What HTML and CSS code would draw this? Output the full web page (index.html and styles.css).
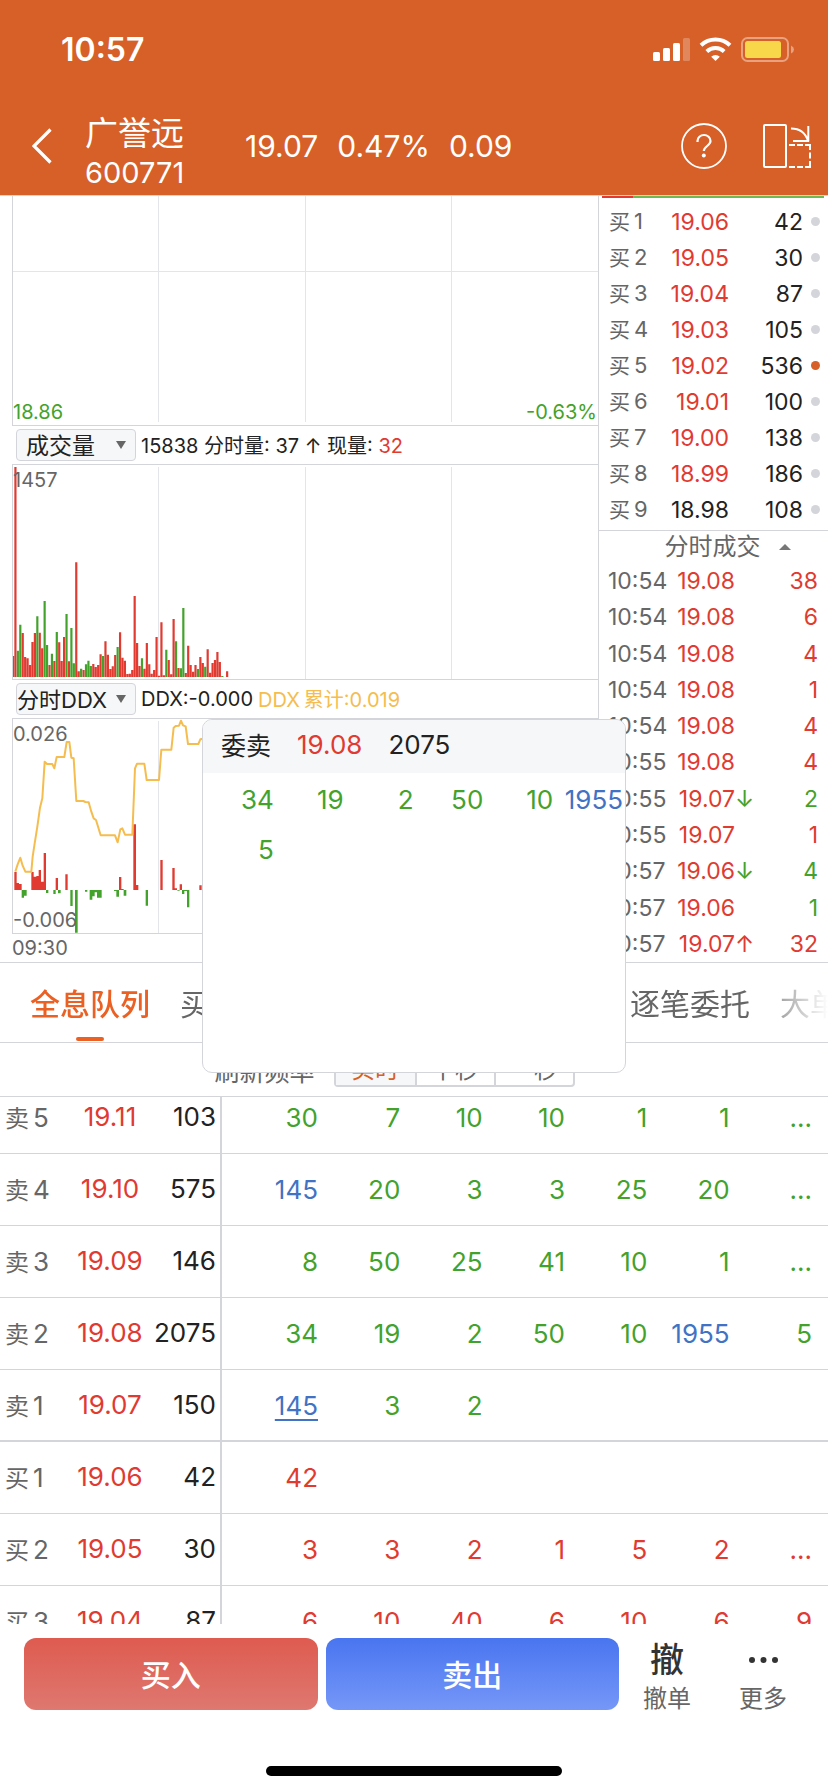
FILE: index.html
```html
<!DOCTYPE html>
<html lang="zh-CN">
<head>
<meta charset="utf-8">
<meta name="viewport" content="width=device-width, initial-scale=1">
<title>广誉远 600771</title>
<link rel="stylesheet" href="styles.css">
</head>
<body>
<div class="page">
  <header class="top">
    <div class="status">
      <span class="clock">10:57</span>
      <svg class="status-icons" width="142" height="26" viewBox="0 0 142 26" aria-hidden="true">
        <g fill="#fff">
          <rect x="0" y="15" width="7" height="9" rx="1.5"/>
          <rect x="10" y="11" width="7" height="13" rx="1.5"/>
          <rect x="20" y="6" width="7" height="18" rx="1.5"/>
          <rect x="30" y="1" width="7" height="23" rx="1.5" opacity=".25"/>
          <path d="M62.500 24l-4.300-4.300a6.500 6.500 0 0 1 8.600 0z"/>
        </g>
        <g fill="none" stroke="#fff" stroke-width="4">
          <path d="M48 8.300a21 21 0 0 1 29 0"/>
          <path d="M53.800 14.500a12.800 12.800 0 0 1 17.400 0"/>
        </g>
        <rect x="89" y="1" width="46" height="23" rx="5.500" fill="none" stroke="#e9a27f" stroke-width="2"/>
        <rect x="92" y="4" width="36" height="17" rx="2.500" fill="#f8d74a"/>
        <path d="M138 8.500q3 1.300 3 4t-3 4z" fill="#e9a27f"/>
      </svg>
    </div>
    <nav class="nav">
      <button class="icon-btn back" aria-label="返回">
        <svg width="20" height="38" viewBox="0 0 20 38"><path d="M18.500 2.500L2 19l16.500 16.500" fill="none" stroke="#fff" stroke-width="3.200"/></svg>
      </button>
      <div class="stock">
        <span class="stock-name">广誉远</span>
        <span class="stock-code">600771</span>
      </div>
      <div class="quote"><span>19.07</span><span>0.47%</span><span>0.09</span></div>
      <div class="nav-actions">
        <button class="icon-btn" aria-label="帮助">
          <svg width="46" height="46" viewBox="0 0 46 46" fill="none" stroke="#fff"><circle cx="23" cy="23" r="22" stroke-width="1.800"/><path d="M16.500 19v-1a6.500 6 0 0 1 13 0c0 4.500-6.700 5.500-6.700 10" stroke-width="2.200"/><circle cx="22.800" cy="32.500" r="2" fill="#fff" stroke="none"/></svg>
        </button>
        <button class="icon-btn" aria-label="横屏">
          <svg width="48" height="46" viewBox="0 0 48 46" fill="none" stroke="#fff" stroke-width="2"><rect x="1" y="2" width="22" height="42" rx="1"/><path d="M28 5.500c10 0 15 6 17 12.500M45.300 3v15.500M30 18h16"/><path d="M26 22h6m2 0h6m2 0h5v5m0 2.500v6m0 2.500v6h-5m-2 0h-6m-2 0h-6"/></svg>
        </button>
      </div>
    </nav>
  </header>

  <main class="body">
    <section class="market">
      <div class="charts">
        <div class="chart price-chart">
          <svg viewBox="0 0 585 229" preserveAspectRatio="none" aria-hidden="true"><path class="grid" d="M0 75.500h585M145.500 0v226M292.500 0v226M438.500 0v226"/></svg>
          <span class="mark bottom-left green">18.86</span>
          <span class="mark bottom-right green">-0.63%</span>
        </div>
        <div class="toolbar">
          <span class="picker">
            <select class="wide" aria-label="副图指标一"><option>成交量</option></select>
            <svg width="10" height="8" viewBox="0 0 10 8" aria-hidden="true"><path d="M0 0h10L5 8z" fill="#666"/></svg>
          </span>
          <span>15838 分时量: 37 ↑ 现量: <span class="red">32</span></span>
        </div>
        <div class="chart sub-chart">
          <svg viewBox="0 0 585 214" preserveAspectRatio="none" aria-hidden="true"><path class="grid" d="M145.500 2v212M292.500 2v212M438.500 2v212"/></svg>
          <svg viewBox="0.45 45 240.4 642" preserveAspectRatio="none" aria-hidden="true">
            <path class="fill-red" d="M0 681V618h.9V681M1 681V51h.9V681M4 681V549h.9V681M5 681V621h.9V681M6 681V625h.9V681M7 681V645h.9V681M8 681V576h.9V681M9 681V549h.9V681M11 681V548h.9V681M12 681V595h.9V681M15 681V645h.9V681M17 681V633h.9V681M19 681V577h.9V681M20 681V633h.9V681M21 681V561h.9V681M23 681V634h.9V681M26 681V337h.9V681M27 681V664h.9V681M29 681V660h.9V681M33 681V642h.9V681M34 681V651h.9V681M35 681V645h.9V681M36 681V613h.9V681M38 681V574h.9V681M39 681V614h.9V681M40 681V657h.9V681M41 681V649h.9V681M42 681V615h.9V681M44 681V547h.9V681M45 681V623h.9V681M46 681V632h.9V681M47 681V672h.9V681M48 681V671h.9V681M49 681V660h.9V681M50 681V438h.9V681M51 681V579h.9V681M52 681V648h.9V681M54 681V656h.9V681M55 681V579h.9V681M56 681V643h.9V681M57 681V671h.9V681M58 681V660h.9V681M59 681V561h.9V681M60 681V677h.9V681M61 681V517h.9V681M62 681V676h.9V681M64 681V630h.9V681M65 681V673h.9V681M66 681V507h.9V681M68 681V654h.9V681M71 681V669h.9V681M72 681V587h.9V681M73 681V645h.9V681M74 681V665h.9V681M75 681V645h.9V681M77 681V621h.9V681M78 681V639h.9V681M80 681V598h.9V681M81 681V668h.9V681M82 681V639h.9V681M83 681V630h.9V681M84 681V606h.9V681M85 681V636h.9V681M88 681V664h.9V681"/>
            <path class="fill-green" d="M2 681V602h.9V681M3 681V524h.9V681M10 681V499h.9V681M13 681V453h.9V681M14 681V585h.9V681M16 681V611h.9V681M18 681V546h.9V681M22 681V492h.9V681M24 681V534h.9V681M25 681V640h.9V681M28 681V656h.9V681M30 681V643h.9V681M31 681V632h.9V681M32 681V648h.9V681M37 681V618h.9V681M43 681V591h.9V681M53 681V625h.9V681M63 681V599h.9V681M67 681V574h.9V681M69 681V655h.9V681M70 681V474h.9V681M76 681V657h.9V681M79 681V650h.9V681M86 681V678h.9V681"/>
          </svg>
          <span class="mark top-left">1457</span>
        </div>
        <div class="toolbar">
          <span class="picker">
            <select aria-label="副图指标二"><option>分时DDX</option></select>
            <svg width="10" height="8" viewBox="0 0 10 8" aria-hidden="true"><path d="M0 0h10L5 8z" fill="#666"/></svg>
          </span>
          <span>DDX:-0.000</span>
          <span class="amber">DDX<span class="cjk-gap">累计:0.019</span></span>
        </div>
        <div class="chart sub-chart">
          <svg viewBox="0 0 585 214" preserveAspectRatio="none" aria-hidden="true"><path class="grid" d="M145.500 2v212M292.500 2v212M438.500 2v212"/></svg>
          <svg viewBox="39 132 1755 642" preserveAspectRatio="none" aria-hidden="true">
            <path class="fill-red" d="M43 645V591h7V624h7V627h8V645zM94 645V591h7V605h8V603h7V585h7V620h8V534h7V645zM167 645V609h7V645zM196 645V598h7V645zM357 645V606h7V642h7v3zM400 645V448h8V630h7V645zM481 645V555h7V645zM517 645V579h7V640h7v5zM539 645V628h7V645zM598 645V631h7V645z"/>
            <path class="fill-green" d="M65 645V668h7V662h8V645zM138 645v9h7v-9zM160 645v12h7v-12zM174 645v10h8v-10zM211 645V693h7V645zM225 645V773h8V645zM255 645v5h7v-5zM269 645V674h8V664h7V652h7V668h14V645zM342 645v3h7V665h8V645zM371 645V662h8V645zM437 645V692h7V645zM532 645v2h7v-2zM546 645v12h7v-9h8V697h7V645z"/>
            <path class="ddx-line" d="M46 590L53 568 61 548 68 572 76 590H94L98 545 104 505 112 455 120 398 127 370 134 260 141 267H157L163 280 170 246H193L200 201H208L214 248 221 250 229 378H250L256 381 266 382 274 410 281 430 288 435 302 481H345L353 502 361 463 367 460 375 479H397L405 280 411 266H433L440 315H477L484 224H514L521 158 527 153 537 152 543 137 549 151 557 154 564 207H595L601 193 610 191"/>
          </svg>
          <span class="mark top-left">0.026</span>
          <span class="mark bottom-left">-0.006</span>
        </div>
        <div class="time-axis">09:30</div>
      </div>

      <aside class="depth">
        <div class="ratio"><i></i></div>
        <table class="book">
          <tr><th>买<b>1</b></th><td class="red">19.06</td><td>42</td><td><i></i></td></tr>
          <tr><th>买<b>2</b></th><td class="red">19.05</td><td>30</td><td><i></i></td></tr>
          <tr><th>买<b>3</b></th><td class="red">19.04</td><td>87</td><td><i></i></td></tr>
          <tr><th>买<b>4</b></th><td class="red">19.03</td><td>105</td><td><i></i></td></tr>
          <tr><th>买<b>5</b></th><td class="red">19.02</td><td>536</td><td><i class="hot"></i></td></tr>
          <tr><th>买<b>6</b></th><td class="red">19.01</td><td>100</td><td><i></i></td></tr>
          <tr><th>买<b>7</b></th><td class="red">19.00</td><td>138</td><td><i></i></td></tr>
          <tr><th>买<b>8</b></th><td class="red">18.99</td><td>186</td><td><i></i></td></tr>
          <tr><th>买<b>9</b></th><td>18.98</td><td>108</td><td><i></i></td></tr>
        </table>
        <button class="ticks-title">分时成交<svg width="12" height="6" viewBox="0 0 12 6" aria-hidden="true"><path d="M0 6h12L6 0z" fill="#777"/></svg></button>
        <ul class="ticks">
          <li><span>10:54</span><span class="red">19.08</span><span></span><span class="red">38</span></li>
          <li><span>10:54</span><span class="red">19.08</span><span></span><span class="red">6</span></li>
          <li><span>10:54</span><span class="red">19.08</span><span></span><span class="red">4</span></li>
          <li><span>10:54</span><span class="red">19.08</span><span></span><span class="red">1</span></li>
          <li><span>10:54</span><span class="red">19.08</span><span></span><span class="red">4</span></li>
          <li><span>10:55</span><span class="red">19.08</span><span></span><span class="red">4</span></li>
          <li><span>10:55</span><span class="red">19.07</span><span class="green">↓</span><span class="green">2</span></li>
          <li><span>10:55</span><span class="red">19.07</span><span></span><span class="red">1</span></li>
          <li><span>10:57</span><span class="red">19.06</span><span class="green">↓</span><span class="green">4</span></li>
          <li><span>10:57</span><span class="red">19.06</span><span></span><span class="green">1</span></li>
          <li><span>10:57</span><span class="red">19.07</span><span class="red">↑</span><span class="red">32</span></li>
        </ul>
      </aside>
    </section>

    <div class="tabs">
      <div class="tabs-track">
        <button class="tab active">全息队列</button>
        <button class="tab">买</button>
        <button class="tab fifth">逐笔委托</button>
        <button class="tab">大单</button>
      </div>
    </div>

    <div class="refresh">
      <span>刷新频率</span>
      <div class="segments">
        <button class="active">实时</button><button>半秒</button><button>一秒</button>
      </div>
    </div>

    <section class="queue">
      <table>
        <colgroup><col class="c-label"><col class="c-price"><col class="c-qty"><col class="c-first"><col span="6"></colgroup>
        <tr class="sell"><th>卖<b>5</b></th><td>19.11</td><td>103</td><td>30</td><td>7</td><td>10</td><td>10</td><td>1</td><td>1</td><td>...</td></tr>
        <tr class="sell"><th>卖<b>4</b></th><td>19.10</td><td>575</td><td class="blue">145</td><td>20</td><td>3</td><td>3</td><td>25</td><td>20</td><td>...</td></tr>
        <tr class="sell"><th>卖<b>3</b></th><td>19.09</td><td>146</td><td>8</td><td>50</td><td>25</td><td>41</td><td>10</td><td>1</td><td>...</td></tr>
        <tr class="sell"><th>卖<b>2</b></th><td>19.08</td><td>2075</td><td>34</td><td>19</td><td>2</td><td>50</td><td>10</td><td class="blue">1955</td><td>5</td></tr>
        <tr class="sell last"><th>卖<b>1</b></th><td>19.07</td><td>150</td><td class="blue"><u>145</u></td><td>3</td><td>2</td><td></td><td></td><td></td><td></td></tr>
        <tr class="buy"><th>买<b>1</b></th><td>19.06</td><td>42</td><td>42</td><td></td><td></td><td></td><td></td><td></td><td></td></tr>
        <tr class="buy"><th>买<b>2</b></th><td>19.05</td><td>30</td><td>3</td><td>3</td><td>2</td><td>1</td><td>5</td><td>2</td><td>...</td></tr>
        <tr class="buy"><th>买<b>3</b></th><td>19.04</td><td>87</td><td>6</td><td>10</td><td>40</td><td>6</td><td>10</td><td>6</td><td>9</td></tr>
      </table>
    </section>

    <div class="popup" role="dialog" aria-label="委卖 19.08">
      <div class="popup-head"><span class="side">委卖</span><span class="red">19.08</span><span>2075</span></div>
      <div class="popup-grid">
        <span>34</span><span>19</span><span>2</span><span>50</span><span>10</span><span class="blue">1955</span><span>5</span>
      </div>
    </div>
  </main>

  <footer class="actions">
    <div class="action-row">
      <div class="trade">
        <button class="buy-btn">买入</button>
        <button class="sell-btn">卖出</button>
      </div>
      <button class="mini"><span class="mini-icon">撤</span>撤单</button>
      <button class="mini"><span class="mini-icon"><svg width="29" height="6" viewBox="0 0 29 6" fill="#333" aria-hidden="true"><circle cx="3" cy="3" r="3"/><circle cx="14.500" cy="3" r="3"/><circle cx="26" cy="3" r="3"/></svg></span>更多</button>
    </div>
    <div class="home"></div>
  </footer>
</div>
</body>
</html>
```

FILE: styles.css
```css
* { box-sizing: border-box; }

:root {
  --orange: #d75f28;
  --accent: #eb6124;
  --red: #e03a31;
  --green: #43a22c;
  --blue: #4272c4;
  --grey: #666;
  --dark: #222;
  --line: #d4d5db;
}

body {
  margin: 0;
  background: #fff;
  color: var(--dark);
  font-family: Inter, "Noto Sans CJK SC", sans-serif;
}

button, select {
  margin: 0;
  padding: 0;
  border: 0;
  background: none;
  color: inherit;
  font: inherit;
}

button svg { display: block; }
th, b { font-weight: 400; }
.red { color: var(--red); }
.green { color: var(--green); }
.blue { color: var(--blue); }
.amber { color: #f5bd4f; }

.page {
  display: flex;
  flex-direction: column;
  height: 100vh;
  overflow: hidden;
}

/* header */
.top {
  background: var(--orange);
  color: #fff;
}
.status {
  display: flex;
  align-items: center;
  justify-content: space-between;
  height: 98px;
  padding: 1px 33px 0 61px;
}
.clock { font-size: 32px; font-weight: 600; }
.nav {
  display: flex;
  align-items: center;
  height: 97px;
  padding: 0 17px 2px 32px;
}
.back { width: 53px; }
.stock {
  display: flex;
  flex-direction: column;
  align-self: flex-end;
  width: 160px;
  line-height: 40px;
}
.stock-name { font-size: 33px; }
.stock-code { font-size: 29px; }
.quote {
  display: flex;
  gap: 19px;
  font-size: 30px;
}
.nav-actions {
  display: flex;
  gap: 36px;
  margin-left: auto;
}

/* market */
.body {
  position: relative;
  display: flex;
  flex: 1;
  flex-direction: column;
  min-height: 0;
  border-top: 1px solid var(--line);
}
.market {
  display: flex;
  border-bottom: 1px solid var(--line);
}
.charts {
  flex: 1;
  border-right: 1px solid var(--line);
}
.chart {
  position: relative;
  margin-left: 12px;
  border-left: 1px solid var(--line);
  border-bottom: 1px solid var(--line);
}
.price-chart { height: 230px; }
.sub-chart { height: 216px; border-top: 1px solid var(--line); }
.chart svg {
  position: absolute;
  inset: 0;
  width: 100%;
  height: 100%;
}
.grid { fill: none; stroke: #e4e5ea; }
.fill-red { fill: var(--red); }
.fill-green { fill: var(--green); }
.ddx-line { fill: none; stroke: #f5bd4f; stroke-width: 6; stroke-linejoin: round; }
.mark {
  position: absolute;
  color: var(--grey);
  font-size: 20px;
  line-height: 24px;
}
.mark.green { color: var(--green); }
.top-left { top: 3px; left: 0; }
.bottom-left { bottom: 1px; left: 0; }
.bottom-right { right: 1px; bottom: 1px; }
.toolbar {
  display: flex;
  align-items: center;
  gap: 5px;
  height: 38px;
  padding: 0 0 1px 16px;
  font-size: 20px;
  white-space: nowrap;
}
.cjk-gap { margin-left: 4px; }
.picker {
  position: relative;
  width: 120px;
  height: 32px;
}
.picker select {
  width: 100%;
  height: 100%;
  padding-top: 2px;
  border: 1px solid var(--line);
  border-radius: 4px;
  background: #f6f7f9;
  appearance: none;
  font-size: 22px;
}
.picker select.wide { padding-left: 9px; font-size: 23px; }
.picker svg {
  position: absolute;
  top: 12px;
  right: 10px;
  pointer-events: none;
}
.time-axis {
  height: 28px;
  padding-left: 12px;
  color: var(--grey);
  font-size: 20px;
  line-height: 28px;
}

/* order book and ticks */
.depth {
  display: flex;
  flex-direction: column;
  width: 229px;
  font-size: 23px;
}
.ratio {
  height: 2px;
  margin: 0 4px 8px 3px;
  background: #6cba50;
}
.ratio i {
  display: block;
  width: 14%;
  height: 100%;
  background: var(--red);
}
.book {
  width: 100%;
  border-spacing: 0;
  table-layout: fixed;
}
.book tr { height: 36px; }
.book th, .book td { padding: 0 0 5px; text-align: right; line-height: 28px; }
.book th {
  width: 60px;
  padding-left: 10px;
  color: var(--grey);
  font-size: 21px;
  text-align: left;
}
.book b { margin-left: 4px; font-size: 22px; }
.book td:nth-child(2) { width: 70px; }
.book td:nth-child(4) { width: 25px; padding-right: 8px; }
.book i {
  display: inline-block;
  width: 9px;
  height: 9px;
  border-radius: 50%;
  background: var(--line);
  vertical-align: 4px;
}
.book .hot { background: var(--orange); }
.ticks-title {
  display: flex;
  align-items: center;
  justify-content: center;
  gap: 18px;
  height: 33px;
  padding-left: 28px;
  border-top: 1px solid var(--line);
  color: var(--grey);
  font-size: 24px;
  line-height: 30px;
}
.ticks {
  display: flex;
  flex: 1;
  flex-direction: column;
  margin: 0;
  padding: 0 10px 0 9px;
  list-style: none;
}
.ticks li {
  display: grid;
  flex: 1;
  grid-template-columns: 60px 67px 20px 1fr;
  align-items: center;
}
.ticks span:first-child { color: var(--grey); }
.ticks span:nth-child(2), .ticks span:last-child { text-align: right; }

/* tabs */
.tabs {
  border-bottom: 1px solid var(--line);
  overflow: hidden;
}
.tabs-track {
  display: grid;
  grid-template-columns: repeat(6, 120px);
  gap: 30px;
  height: 79px;
  padding-left: 30px;
  mask-image: linear-gradient(to right, #000 calc(100% - 80px), transparent);
}
.tab {
  display: flex;
  align-items: center;
  padding-bottom: 2px;
  position: relative;
  color: var(--grey);
  font-size: 30px;
  white-space: nowrap;
}
.tab.fifth { grid-column: 5; }
.tab.active { color: var(--accent); font-weight: 500; }
.tab.active::after {
  content: "";
  position: absolute;
  bottom: 1px;
  left: 46px;
  width: 28px;
  height: 4px;
  border-radius: 2px;
  background: var(--accent);
}

/* refresh */
.refresh {
  display: flex;
  align-items: center;
  justify-content: center;
  gap: 19px;
  height: 54px;
  padding-right: 39px;
  border-bottom: 1px solid var(--line);
  color: var(--grey);
  font-size: 25px;
}
.segments {
  display: flex;
  height: 34px;
  border: 2px solid var(--line);
  border-radius: 4px;
  font-size: 24px;
  line-height: 28px;
}
.segments button { width: 79px; }
.segments button + button { border-left: 2px solid var(--line); }
.segments .active { background: #f6f7f9; color: var(--orange); }

/* queue */
.queue {
  flex: 1;
  min-height: 0;
  overflow: hidden;
}
.queue table {
  width: 100%;
  margin-top: -15px;
  border-spacing: 0;
  table-layout: fixed;
  font-size: 26px;
}
.c-label { width: 70px; }
.c-price { width: 80px; }
.c-qty { width: 72px; }
.c-first { width: 112px; }
.queue tr { height: 72px; }
.queue th, .queue td {
  padding: 0 16px 2px 0;
  border-bottom: 1px solid var(--line);
  text-align: right;
}
.queue th {
  padding-left: 5px;
  padding-right: 0;
  color: var(--grey);
  font-size: 24px;
  text-align: left;
}
.queue b { margin-left: 4px; font-size: 26px; }
.queue td:nth-child(2) {
  padding-right: 0;
  color: var(--red);
  text-align: center;
}
.queue td:nth-child(3) {
  padding-right: 4px;
  border-right: 2px solid var(--line);
}
.queue td:nth-child(n+4) { padding-bottom: 0; }
.sell td:nth-child(n+4) { color: var(--green); }
.buy td:nth-child(n+4) { color: var(--red); }
.sell td.blue:nth-child(n+4) { color: var(--blue); }
.queue .last th, .queue .last td { border-bottom-width: 2px; }
.queue u { text-underline-offset: 4px; text-decoration-thickness: 2px; }

/* popup */
.popup {
  position: absolute;
  top: 523px;
  right: 202px;
  left: 202px;
  height: 354px;
  border: 1px solid var(--line);
  border-radius: 10px;
  background: #fff;
  font-size: 26px;
  overflow: hidden;
}
.popup-head {
  display: flex;
  align-items: center;
  height: 53px;
  gap: 26px;
  padding: 0 18px 5px;
  background: #f6f7f9;
}
.side { font-size: 25px; }
.popup-grid {
  display: grid;
  grid-template-columns: repeat(6, 1fr);
  grid-auto-rows: 50px;
  align-items: center;
  padding: 1px 2px 0 1px;
  color: var(--green);
  text-align: right;
}

/* footer */
.actions { padding: 14px 0 16px; }
.action-row {
  display: flex;
  padding: 0 17px 0 24px;
}
.trade {
  display: flex;
  flex: 1;
  gap: 8px;
}
.trade button {
  flex: 1;
  height: 72px;
  padding-bottom: 3px;
  border-radius: 12px;
  color: #fff;
  font-size: 30px;
  font-weight: 500;
}
.buy-btn { background: linear-gradient(#de5b50, #de7870); }
.sell-btn { background: linear-gradient(#4975f0, #7597f7); }
.mini {
  display: flex;
  flex-direction: column;
  align-items: center;
  width: 96px;
  padding-top: 2px;
  color: var(--grey);
  font-size: 24px;
  line-height: 38px;
}
.mini-icon {
  display: flex;
  align-items: center;
  height: 40px;
  color: #333;
  font-size: 34px;
  font-weight: 500;
}
.home {
  width: 296px;
  height: 10px;
  margin: 48px auto 0;
  border-radius: 5px;
  background: #000;
}
```
